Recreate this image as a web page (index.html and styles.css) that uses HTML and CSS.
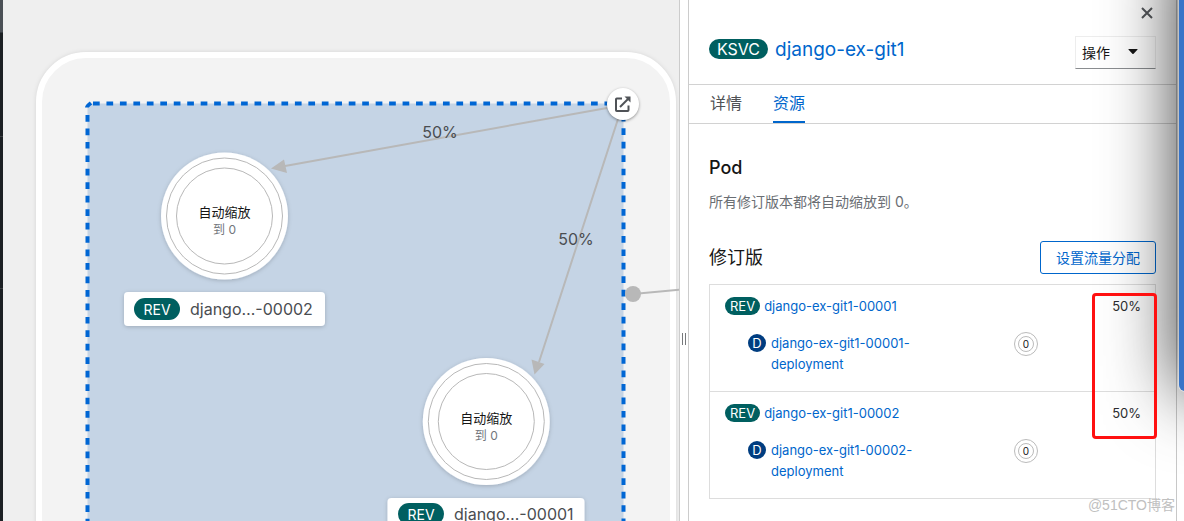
FILE: index.html
```html
<!DOCTYPE html>
<html lang="zh-CN">
<head>
<meta charset="utf-8">
<title>django-ex-git1</title>
<link rel="stylesheet" href="styles.css">
</head>
<body>
<div class="app">
  <div class="nav-edge"></div>
  <main class="topology">
    <svg class="graph" role="img" aria-label="拓扑">
      <defs>
        <filter id="soft" x="-20%" y="-20%" width="140%" height="140%">
          <feDropShadow dx="0" dy="1" stdDeviation="2" flood-color="#000" flood-opacity=".2"/>
        </filter>
        <g id="pod">
          <circle r="63.500" fill="#fff" filter="url(#soft)"/>
          <circle r="58" class="ring"/>
          <circle r="48" class="ring"/>
          <text class="pod-title" y="1">自动缩放</text>
          <text class="pod-sub" y="18">到 0</text>
        </g>
      </defs>
      <rect x="36" y="55" width="634" height="700" rx="47" class="app-group"/>
      <rect x="84.500" y="103.500" width="536" height="600" rx="4" fill="#c5d4e5"/>
      <path class="dash" d="M90 103.500H606M620.500 114.800V700M84.500 115V700"/>
      <path class="corner" d="M84 107.500Q84 106 88 103"/>
      <path class="edge" d="M604 108L282 166M615 119L536 362M630 294L690 288.500"/>
      <path class="arrow" d="M268 168.500L281 159.500L284 173ZM531.500 374.500L528.500 359.500L541.500 364Z"/>
      <circle cx="630" cy="294" r="8" fill="#b8b8b8"/>
      <text class="edge-label" x="437" y="138">50%</text>
      <text class="edge-label" x="573" y="245">50%</text>
      <use href="#pod" x="221.500" y="216"/>
      <use href="#pod" x="483.300" y="421.500"/>
      <g filter="url(#soft)">
        <rect x="121" y="292" width="201" height="34" rx="4" fill="#fff"/>
        <rect x="384.500" y="498" width="197" height="34" rx="4" fill="#fff"/>
      </g>
      <rect x="131" y="298" width="46" height="22" rx="11" fill="#005f60"/>
      <rect x="395" y="503" width="46" height="22" rx="11" fill="#005f60"/>
      <text class="pill-text" x="154" y="315">REV</text>
      <text class="pill-text" x="418" y="520">REV</text>
      <text class="node-name" x="187" y="315">django…-00002</text>
      <text class="node-name" x="451" y="520">django…-00001</text>
    </svg>
    <a class="open-url" href="#open" aria-label="打开 URL">
      <svg viewBox="0 0 16 16" width="16" height="16" fill="none" stroke="#4f5257" stroke-width="2">
        <path d="M7 2.500H1.800Q1 2.500 1 3.300V14.200Q1 15 1.800 15H12.700Q13.500 15 13.500 14.200V9.500"/>
        <path d="M5 11L13 3"/><path d="M9.500 .5H15.500V6.500Z" fill="#4f5257" stroke="none"/>
      </svg>
    </a>
  </main>
  <div class="splitter"><span class="grip"></span></div>
  <aside class="panel">
    <header class="panel-head">
      <div class="close-row">
        <button class="close" type="button" aria-label="关闭">
          <svg viewBox="0 0 12 12" width="12" height="12" stroke="#55585c" stroke-width="2"><path d="M1 1L11 11M11 1L1 11"/></svg>
        </button>
      </div>
      <div class="title-row">
        <h1 class="title"><span class="pill pill-large">KSVC</span><a href="#service">django-ex-git1</a></h1>
        <button class="actions" type="button">操作
          <svg viewBox="0 0 10 6" width="10" height="6"><path d="M1 0H9Q10 0 9.400 .8L5.600 4.800Q5 5.400 4.400 4.800L.6 .8Q0 0 1 0Z" fill="#151515"/></svg>
        </button>
      </div>
    </header>
    <nav class="tabs">
      <a class="tab" href="#details">详情</a>
      <a class="tab active" href="#resources">资源</a>
    </nav>
    <section class="body">
      <h2 class="heading heading-strong">Pod</h2>
      <p class="note">所有修订版本都将自动缩放到 0。</p>
      <div class="revisions-head">
        <h2 class="heading">修订版</h2>
        <button class="traffic" type="button">设置流量分配</button>
      </div>
      <div class="list-wrap">
        <ul class="list">
          <li class="item">
            <div class="rev"><span class="pill">REV</span><a href="#rev1">django-ex-git1-00001</a><span class="percent">50%</span></div>
            <div class="dep"><span class="dot">D</span><a class="dep-link" href="#dep1">django-ex-git1-00001-deployment</a><span class="mini"><span class="mini-in">0</span></span></div>
          </li>
          <li class="item">
            <div class="rev"><span class="pill">REV</span><a href="#rev2">django-ex-git1-00002</a><span class="percent">50%</span></div>
            <div class="dep"><span class="dot">D</span><a class="dep-link" href="#dep2">django-ex-git1-00002-deployment</a><span class="mini"><span class="mini-in">0</span></span></div>
          </li>
        </ul>
        <div class="highlight"></div>
      </div>
    </section>
  </aside>
  <div class="page-edge"></div>
  <div class="window"></div>
  <div class="watermark">@51CTO博客</div>
</div>
</body>
</html>
```
FILE: styles.css
```css
* { box-sizing: border-box; }
body {
  margin: 0;
  font-family: Inter, "Noto Sans CJK SC", sans-serif;
  font-size: 13px;
  color: #151515;
  background: #fff;
}
a { color: #0066cc; text-decoration: none; }
h1, h2, p, ul { margin: 0; padding: 0; font-weight: 400; }
button { font-family: inherit; cursor: pointer; }

.app { position: relative; display: flex; height: 100vh; overflow: hidden; }
.nav-edge {
  width: 3px;
  background: linear-gradient(#4b5056 0 32px, #1c2024 33px 136px, #3c3f42 136px 137px, #1c2024 137px 288px, #3c3f42 288px 289px, #1c2024 289px);
}
.topology { position: relative; flex: 1; min-width: 0; background: #efefef; overflow: hidden; }
.graph { display: block; width: 100%; height: 100%; }
.app-group { fill: #f3f3f3; stroke: #fff; stroke-width: 6; filter: drop-shadow(0 0 2px rgba(0, 0, 0, .1)); }
.dash { fill: none; stroke: #0066d4; stroke-width: 4; stroke-dasharray: 6.700 6.760; }
.corner { fill: none; stroke: #0066d4; stroke-width: 4; }
.edge { fill: none; stroke: #b8b8b8; stroke-width: 2; }
.arrow { fill: #b8b8b8; }
.ring { fill: none; stroke: #b8b8b8; }
.graph text { text-anchor: middle; }
.pod-title { font-size: 13px; fill: #151515; }
.pod-sub { font-size: 12px; fill: #72767b; }
.edge-label { font-size: 16px; fill: #4a4d51; }
.pill-text { font-size: 14px; fill: #fff; }
.graph .node-name { font-size: 16px; fill: #4a4d51; text-anchor: start; }
.open-url {
  position: absolute;
  left: 604px;
  top: 88px;
  width: 32px;
  height: 32px;
  display: grid;
  place-items: center;
  border-radius: 50%;
  background: #fff;
  box-shadow: 0 1px 3px rgba(0, 0, 0, .4);
}

.splitter { width: 10px; display: grid; place-items: center; border: 1px solid #ccc; border-width: 0 1px; background: #fff; }
.grip { width: 4px; height: 12px; margin-top: 156px; border: 1px solid #77797c; border-width: 0 1px; }

.panel { width: 487px; background: #fff; }
.panel-head { padding: 0 20px 15px; border-bottom: 1px solid #d2d2d2; }
.close-row { display: flex; justify-content: flex-end; height: 26px; padding: 7px 3px 0; }
.close { display: block; width: 12px; height: 12px; padding: 0; border: 0; background: none; }
.close svg { display: block; }
.title-row { display: flex; justify-content: space-between; padding-top: 10px; }
.title { display: flex; align-items: center; gap: 7px; height: 26px; font-size: 19px; }
.pill {
  display: inline-block;
  padding: 0 5px;
  border-radius: 10px;
  background: #005f60;
  color: #fff;
  font-size: 13px;
  line-height: 18px;
}
.pill-large { padding: 0 8px; font-size: 16px; line-height: 20px; }
.actions {
  display: flex;
  align-items: center;
  gap: 18px;
  height: 33px;
  width: 81px;
  padding: 0 6px 2px;
  border: 1px solid #ededed;
  border-bottom-color: #8a8d90;
  background: #fff;
  font-size: 14px;
  color: #151515;
}
.tabs { display: flex; gap: 31px; height: 39px; padding: 0 21px; border-bottom: 1px solid #d2d2d2; }
.tab { height: 38px; font-size: 16px; line-height: 37px; color: #4f5255; }
.tab.active { color: #0066cc; border-bottom: 2px solid #0066cc; }
.body { padding: 32px 20px 0; }
.heading { font-size: 18px; line-height: 24px; }
.heading-strong { font-weight: 500; }
.note { margin-top: 12px; font-size: 14px; line-height: 20px; color: #6a6e73; }
.revisions-head { display: flex; justify-content: space-between; align-items: center; margin-top: 29px; }
.traffic { height: 33px; padding: 0 15px 2px; border: 1px solid #0066cc; border-radius: 3px; background: #fff; color: #0066cc; font-size: 14px; }
.list-wrap { position: relative; margin-top: 10px; }
.list { list-style: none; border: 1px solid #ddd; }
.item { padding: 11px 14px 16px 15px; }
.item + .item { border-top: 1px solid #ddd; }
.rev { display: flex; align-items: center; gap: 4px; height: 20px; }
.percent { margin-left: auto; color: #2b2d2f; }
.dep { display: grid; grid-template-columns: 18px 1fr 127px; gap: 0 5px; margin-top: 17px; padding-left: 23px; line-height: 21px; }
.dep-link { max-width: 180px; }
.dot { width: 18px; height: 18px; margin-top: 1px; border-radius: 50%; background: #003d80; color: #fff; line-height: 18px; text-align: center; }
.mini { display: grid; place-items: center; width: 24px; height: 24px; margin-top: -1px; border: 1px solid #bbb; border-radius: 50%; }
.mini-in { width: 16px; height: 16px; border: 1px solid #bbb; border-radius: 50%; font-size: 10px; line-height: 14px; text-align: center; }
.highlight { position: absolute; top: 9px; right: -1px; width: 65px; height: 146px; border: 3px solid #ff1010; border-radius: 4px; z-index: 3; }

.page-edge { width: 8px; border-left: 1px solid #c8c8c8; background: #fff; }
.window {
  position: absolute;
  top: -60px;
  right: -295px;
  width: 300px;
  height: 451px;
  border-radius: 6px;
  background: #3874c8;
  box-shadow: 0 0 0 1px rgba(255, 255, 255, .4), 0 0 72px rgba(0, 0, 0, .8);
  z-index: 2;
}
.watermark { position: absolute; right: 9px; bottom: 6px; font-family: "Liberation Sans", "Noto Sans CJK SC", sans-serif; font-size: 14px; line-height: 20px; color: #c0c0c0; }
```
